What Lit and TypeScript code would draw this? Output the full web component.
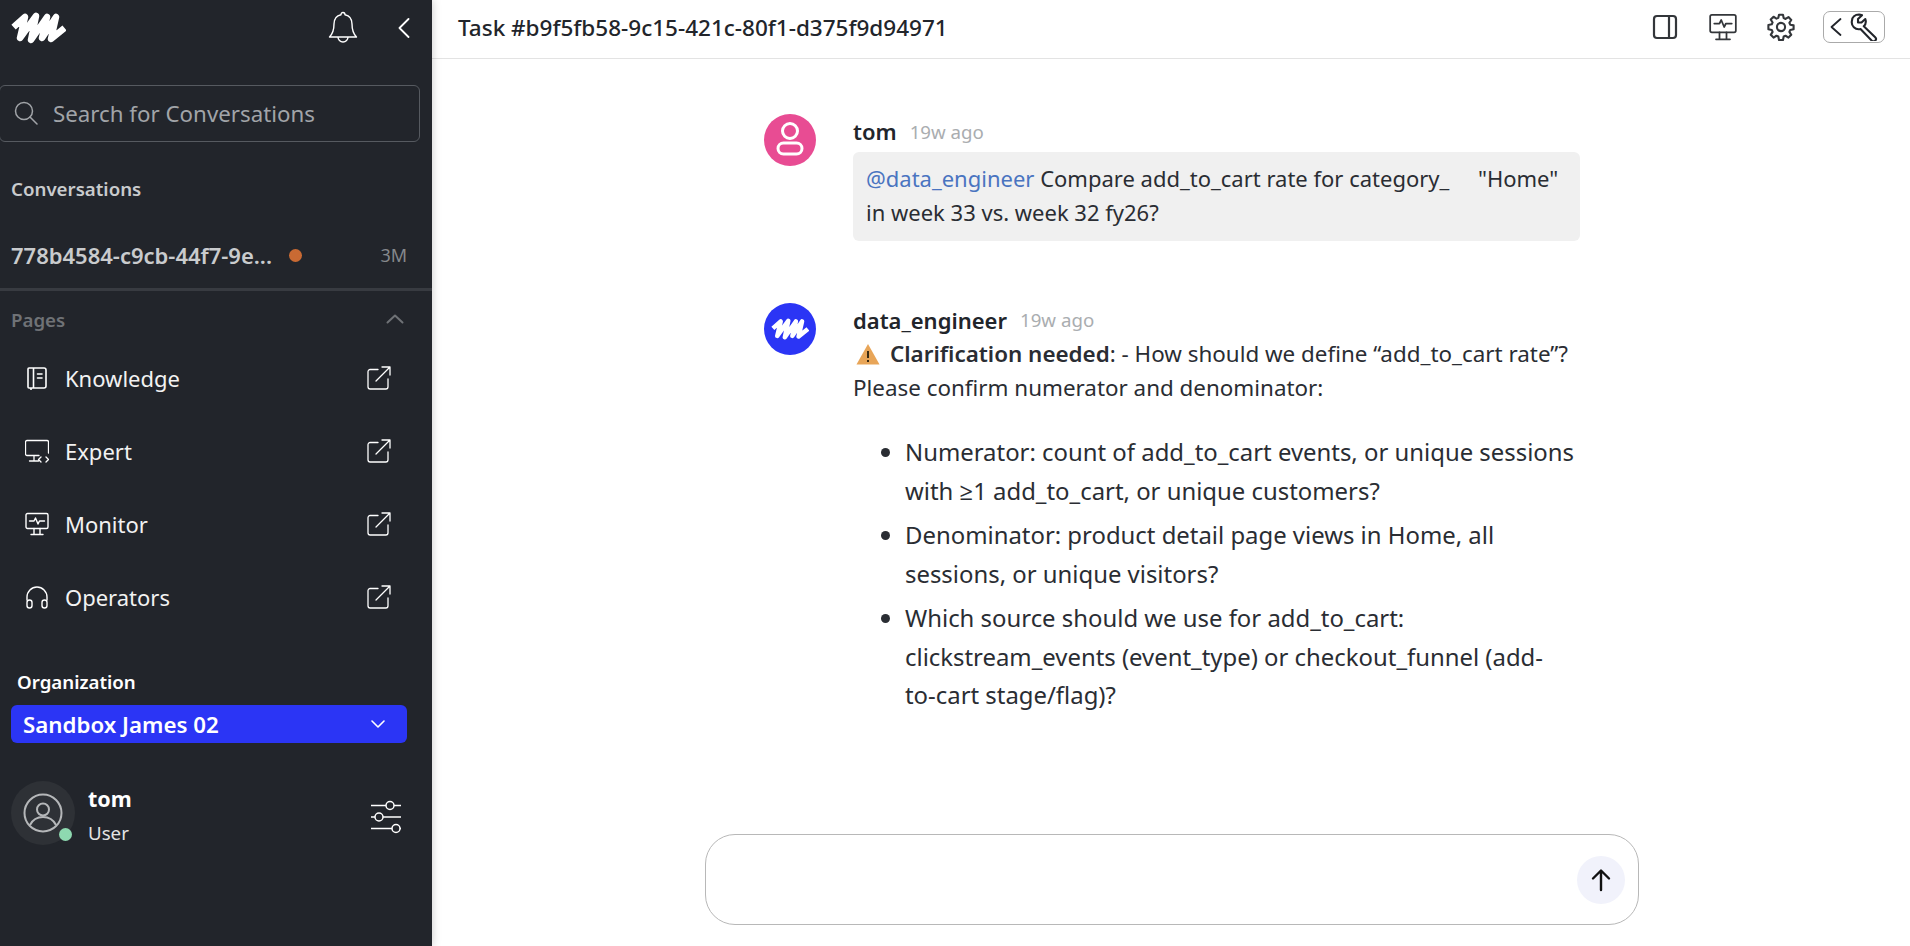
import { LitElement, html, css, svg } from "lit";
import { customElement } from "lit/decorators.js";

const logoPath = (c: string, w: number) => svg`<path d="M5 13 L14 5 L9 26 L25 4 L20 28 L36 5 L31 26 L45 5 L40 27 L51 18" fill="none" stroke=${c} stroke-width=${w} stroke-linecap="square" stroke-linejoin="round"/>`;
const ext = html`<svg class="ext" viewBox="0 0 24 24" fill="none" stroke="#fff" stroke-width="1.3" stroke-linecap="round" stroke-linejoin="round"><path d="M11 3.5H3.2A2.2 2.2 0 0 0 1 5.7v15.1A2.2 2.2 0 0 0 3.2 23h15.6a2.2 2.2 0 0 0 2.2-2.2V13"/><path d="M9 15 23 1M15 1h8v8"/></svg>`;
const monitorPulse = (c: string, sw: number) => html`<svg viewBox="0 0 24 24" fill="none" stroke=${c} stroke-width=${sw} stroke-linecap="round" stroke-linejoin="round"><rect x="1" y="1.5" width="22" height="15" rx="1.5"/><path d="M4.5 9H9l1.5-3 2.5 6 1.5-3H19.5M9 16.5v5.5M15 16.5v5.5M6 22.5h12"/></svg>`;

@customElement("app-root")
export class AppRoot extends LitElement {
  static styles = css`
    :host { display: flex; height: 100vh; min-height: 946px; overflow: hidden; font-family: "Noto Sans", "Open Sans", sans-serif; background: #fff; color: #2a2d33; }
    * { box-sizing: border-box; }
    svg { display: block; }
    .side { width: 432px; flex: none; background: #22252b; color: #fff; box-shadow: 0 0 9px rgba(0,0,0,.22); position: relative; z-index: 1; }
    .top { height: 85px; display: flex; align-items: center; padding-left: 11px; padding-bottom: 30px; }
    .logo { width: 55px; height: 32px; }
    .bell { width: 30px; height: 33px; margin-left: auto; }
    .collapse { width: 12px; height: 20px; margin: 0 22px 0 40px; }
    .search { width: 421px; height: 57px; margin-left: -1px; border: 1px solid #565a60; border-radius: 6px; display: flex; align-items: center; padding: 0 0 1px 14px; gap: 15px; color: #a1a4a8; font-size: 22.3px; }
    .search svg { width: 24px; height: 24px; }
    .label { height: 28px; line-height: 28px; margin: 33px 0 22px 11px; font-size: 18.7px; font-weight: 600; color: #c9cbcd; }
    .conv { height: 66px; display: flex; align-items: center; padding: 0 25px 3px 11px; font-size: 22px; font-weight: 600; color: #c9cbcd; border-bottom: 3px solid #383b41; }
    .conv .dot { width: 13px; height: 13px; border-radius: 50%; background: #c96a33; margin-left: 17px; }
    .conv .time { margin-left: auto; font-size: 18px; font-weight: 400; color: #85888c; }
    .conv .name { line-height: 26px; }
    .pages { height: 50px; padding: 6px 28px 0 11px; display: flex; align-items: center; justify-content: space-between; font-size: 18.7px; font-weight: 600; color: #6f7276; }
    .pages svg { width: 18px; height: 10px; }
    .nav { height: 73px; display: flex; align-items: center; padding: 0 41px 0 25px; font-size: 22px; color: #f2f2f2; }
    .nav .ico { width: 24px; height: 24px; margin-right: 16px; }
    .nav .ext { width: 24px; height: 24px; margin-left: auto; }
    .org { height: 24px; line-height: 24px; margin: 37px 0 11px 17px; font-size: 18.7px; font-weight: 600; }
    .select { width: 396px; height: 38px; margin-left: 11px; border-radius: 6px; background: #2b35f5; display: flex; align-items: center; justify-content: space-between; padding: 0 22px 0 12px; font-size: 22.3px; font-weight: 600; }
    .select svg { width: 14px; height: 8px; }
    .user { display: flex; margin: 38px 0 0 11px; height: 64px; position: relative; }
    .av { width: 64px; height: 64px; border-radius: 50%; background: #2e3136; display: flex; align-items: center; justify-content: center; position: relative; }
    .av svg { width: 40px; height: 40px; }
    .online { position: absolute; width: 13px; height: 13px; border-radius: 50%; background: #8ed9b0; left: 48px; top: 47px; }
    .uinfo { margin-left: 13px; display: flex; flex-direction: column; padding-top: 1px; }
    .uname { font-size: 21.5px; font-weight: 700; line-height: 34px; height: 35px; }
    .urole { font-size: 18.7px; line-height: 34px; color: #e4e4e4; }
    .sliders { width: 32px; height: 34px; margin: 19px 30px 0 auto; }
    .main { flex: 1; min-width: 0; display: flex; flex-direction: column; }
    .head { height: 59px; flex: none; border-bottom: 1px solid #e3e3e3; display: flex; align-items: center; padding: 0 25px 4px 26px; }
    .title { font-size: 22.5px; font-weight: 500; color: #22252b; }
    .tools { margin-left: auto; display: flex; gap: 30px; align-items: center; }
    .tools svg { width: 28px; height: 28px; }
    .devbtn { margin-left: -2px; width: 62px; height: 32px; border: 1px solid #aaa; border-radius: 7px; display: flex; align-items: center; padding-left: 6px; gap: 8px; }
    .tools .devbtn .chev { width: 12px; height: 20px; }
    .tools .devbtn .wrench { width: 28px; height: 28px; }
    .thread { flex: 1; width: 816px; margin: 0 0 0 332px; padding-top: 55px; }
    .msg { display: flex; gap: 37px; }
    .msg + .msg { margin-top: 61.5px; }
    .circle { width: 52px; height: 52px; border-radius: 50%; flex: none; display: flex; align-items: center; justify-content: center; }
    .pink { background: #e84c93; }
    .blue { background: #2b35f5; }
    .body { flex: 1; min-width: 0; padding-top: 3px; }
    .meta { height: 28px; display: flex; align-items: center; gap: 13px; font-size: 22px; font-weight: 600; color: #22252b; }
    .meta span { font-size: 18.7px; font-weight: 400; color: #aaadb0; }
    .bubble { margin-top: 7px; background: #f0f0f0; border-radius: 6px; padding: 9px 13px 12px; font-size: 22px; line-height: 34px; width: 727px; }
    .mention { color: #4a74c0; }
    .para { font-size: 22.4px; line-height: 34px; margin-top: 3px; }
    .para svg.warn { display: inline-block; vertical-align: -3px; width: 24px; height: 22px; margin: 0 10px 0 3px; }
    b { font-weight: 600; }
    ul { margin: 28.5px 0 0; padding: 0 0 0 52px; font-size: 23.9px; line-height: 38.7px; width: 726px; }
    li { margin-bottom: 5.5px; }
    .composer { flex: none; width: 934px; height: 91px; margin: 0 0 21px 273px; border: 1px solid #b8b8b8; border-radius: 30px; display: flex; align-items: center; justify-content: flex-end; padding-right: 13px; }
    .send { width: 48px; height: 48px; border-radius: 50%; background: #f1f2fb; display: flex; align-items: center; justify-content: center; }
    .send svg { width: 24px; height: 24px; }
  `;

  render() {
    return html`
      <aside class="side">
        <div class="top">
          <svg class="logo" viewBox="0 0 55 32">${logoPath("#fff", 6.5)}</svg>
          <svg class="bell" viewBox="0 0 30 33" fill="none" stroke="#fff" stroke-width="1.4" stroke-linejoin="round"><path d="M15 1.5c1.4 0 2 1 2 2.2 4.5 1 7 4.800 7 9.300 0 6 1.500 10 4.500 13H1.500C4.500 23 6 19 6 13c0-4.500 2.500-8.300 7-9.300 0-1.200.6-2.200 2-2.200z"/><path d="M10 26a5 5 0 0 0 10 0"/></svg>
          <svg class="collapse" viewBox="0 0 12 20" fill="none" stroke="#fff" stroke-width="1.800" stroke-linecap="round" stroke-linejoin="round"><path d="M10.500 1 1.500 10l9 9"/></svg>
        </div>
        <div class="search">
          <svg viewBox="0 0 24 24" fill="none" stroke="#a1a4a8" stroke-width="1.500" stroke-linecap="round"><circle cx="10" cy="10" r="8.500"/><path d="m16 16 7 7"/></svg>
          Search for Conversations
        </div>
        <div class="label">Conversations</div>
        <div class="conv"><span class="name">778b4584-c9cb-44f7-9e...</span><i class="dot"></i><span class="time">3M</span></div>
        <div class="pages">Pages<svg viewBox="0 0 18 10" fill="none" stroke="#6f7276" stroke-width="2" stroke-linecap="round" stroke-linejoin="round"><path d="M1.500 8.500 9 1.500l7.500 7"/></svg></div>
        <div class="nav"><svg class="ico" viewBox="0 0 24 24" fill="none" stroke="#fff" stroke-width="1.600" stroke-linecap="round" stroke-linejoin="round"><path d="M4 2h15a2 2 0 0 1 2 2v16a2 2 0 0 1-2 2H4a1 1 0 0 1-1-1V3a1 1 0 0 1 1-1zM8.500 2v20M6 22v2M12.500 8h4.500M12.500 12h4.500"/></svg>Knowledge${ext}</div>
        <div class="nav"><svg class="ico" viewBox="0 0 24 24" fill="none" stroke="#fff" stroke-width="1.300" stroke-linecap="round" stroke-linejoin="round"><path d="M14 16.500H2A1.500 1.500 0 0 1 .5 15V3A1.500 1.500 0 0 1 2 1.500h20A1.500 1.500 0 0 1 23.500 3v11M9 16.500v5M4.500 22h9M16 18l-2.500 2.500L16 23M21 18l2.500 2.500L21 23"/></svg>Expert${ext}</div>
        <div class="nav"><span class="ico">${monitorPulse("#fff", 1.400)}</span>Monitor${ext}</div>
        <div class="nav"><svg class="ico" viewBox="0 0 24 24" fill="none" stroke="#fff" stroke-width="1.400" stroke-linecap="round" stroke-linejoin="round"><path d="M2 15V12a10 10 0 0 1 20 0v3"/><rect x="2" y="15" width="5" height="8" rx="2.500"/><rect x="17" y="15" width="5" height="8" rx="2.500"/></svg>Operators${ext}</div>
        <div class="org">Organization</div>
        <div class="select">Sandbox James 02<svg viewBox="0 0 14 8" fill="none" stroke="#fff" stroke-width="1.600" stroke-linecap="round" stroke-linejoin="round"><path d="M1 1l6 6 6-6"/></svg></div>
        <div class="user">
          <div class="av"><svg viewBox="0 0 40 40" fill="none" stroke="#b5b7b9" stroke-width="2"><circle cx="20" cy="20" r="18.500"/><circle cx="20" cy="16.500" r="6"/><path d="M7 32c3-6 8-8 13-8s10 2 13 8"/></svg></div>
          <i class="online"></i>
          <div class="uinfo"><div class="uname">tom</div><div class="urole">User</div></div>
          <svg class="sliders" viewBox="0 0 32 34" fill="none" stroke="#fff" stroke-width="1.500"><path d="M1 5.500h15M24 5.500h7M1 17h4M13 17h18M1 28.500h21M30 28.500h1"/><circle cx="20" cy="5.500" r="4"/><circle cx="9" cy="17" r="4"/><circle cx="26" cy="28.500" r="4"/></svg>
        </div>
      </aside>
      <main class="main">
        <header class="head">
          <div class="title">Task #b9f5fb58-9c15-421c-80f1-d375f9d94971</div>
          <div class="tools">
            <svg viewBox="0 0 28 28" fill="none" stroke="#33363a" stroke-width="2.200" stroke-linejoin="round"><rect x="3" y="3" width="22" height="22" rx="3"/><path d="M18 3v22"/></svg>
            ${monitorPulse("#33363a", 1.500)}
            <svg viewBox="0 0 24 24" fill="none" stroke="#33363a" stroke-width="1.800" stroke-linecap="round" stroke-linejoin="round"><circle cx="12" cy="12" r="3.500"/><path d="M10.300 1.500h3.400l.6 2.900 1.600.7 2.500-1.600 2.400 2.400-1.600 2.500.7 1.600 2.900.6v3.400l-2.900.6-.7 1.600 1.600 2.500-2.400 2.400-2.500-1.600-1.600.7-.6 2.900h-3.400l-.6-2.900-1.600-.7-2.500 1.600-2.400-2.400 1.600-2.500-.7-1.600-2.900-.6V10.300l2.900-.6.7-1.600-1.600-2.500 2.400-2.400 2.500 1.600 1.600-.7z"/></svg>
            <div class="devbtn">
              <svg class="chev" viewBox="0 0 12 20" fill="none" stroke="#22252b" stroke-width="1.800" stroke-linecap="round" stroke-linejoin="round"><path d="M10.500 2 1.500 10l9 8"/></svg>
              <svg class="wrench" viewBox="0 0 28 28" fill="none" stroke="#22252b" stroke-width="2.100" stroke-linecap="round" stroke-linejoin="round"><path d="M9 1.500a7 7 0 0 1 3 .7L8 6v3.500h3.500L15.300 6a7 7 0 0 1-1.500 7.300l11.400 11a2.400 2.400 0 0 1-3.400 3.400L10.500 16A7 7 0 0 1 2 7.500C2 4 5 1.500 9 1.500z"/></svg>
            </div>
          </div>
        </header>
        <section class="thread">
          <article class="msg">
            <div class="circle pink"><svg width="32" height="38" viewBox="0 0 32 38" fill="none" stroke="#fff" stroke-width="3"><circle cx="16" cy="10" r="7.500"/><rect x="4" y="22" width="24" height="11" rx="5.500"/></svg></div>
            <div class="body">
              <div class="meta">tom <span>19w ago</span></div>
              <div class="bubble"><span class="mention">@data_engineer</span> Compare add_to_cart rate for category_ &nbsp;&nbsp;&nbsp;&nbsp;"Home"<br>in week 33 vs. week 32 fy26?</div>
            </div>
          </article>
          <article class="msg">
            <div class="circle blue"><svg width="38" height="22" viewBox="0 0 55 32">${logoPath("#fff", 6.5)}</svg></div>
            <div class="body">
              <div class="meta">data_engineer <span>19w ago</span></div>
              <div class="para"><svg class="warn" viewBox="0 0 24 22"><path d="M12 1 23.500 21.500H.5z" fill="#e8a558"/><path d="M12 8v7M12 17v2" stroke="#3a2a12" stroke-width="2"/></svg><b>Clarification needed</b>: - How should we define “add_to_cart rate”?<br>Please confirm numerator and denominator:</div>
              <ul>
                <li>Numerator: count of add_to_cart events, or unique sessions with ≥1 add_to_cart, or unique customers?</li>
                <li>Denominator: product detail page views in Home, all sessions, or unique visitors?</li>
                <li>Which source should we use for add_to_cart: clickstream_events (event_type) or checkout_funnel (add-<br>to-cart stage/flag)?</li>
              </ul>
            </div>
          </article>
        </section>
        <div class="composer"><div class="send"><svg viewBox="0 0 24 24" fill="none" stroke="#111" stroke-width="2.400" stroke-linecap="round" stroke-linejoin="round"><path d="M12 22V3M4 10.500 12 2.500l8 8"/></svg></div></div>
      </main>
    `;
  }
}
